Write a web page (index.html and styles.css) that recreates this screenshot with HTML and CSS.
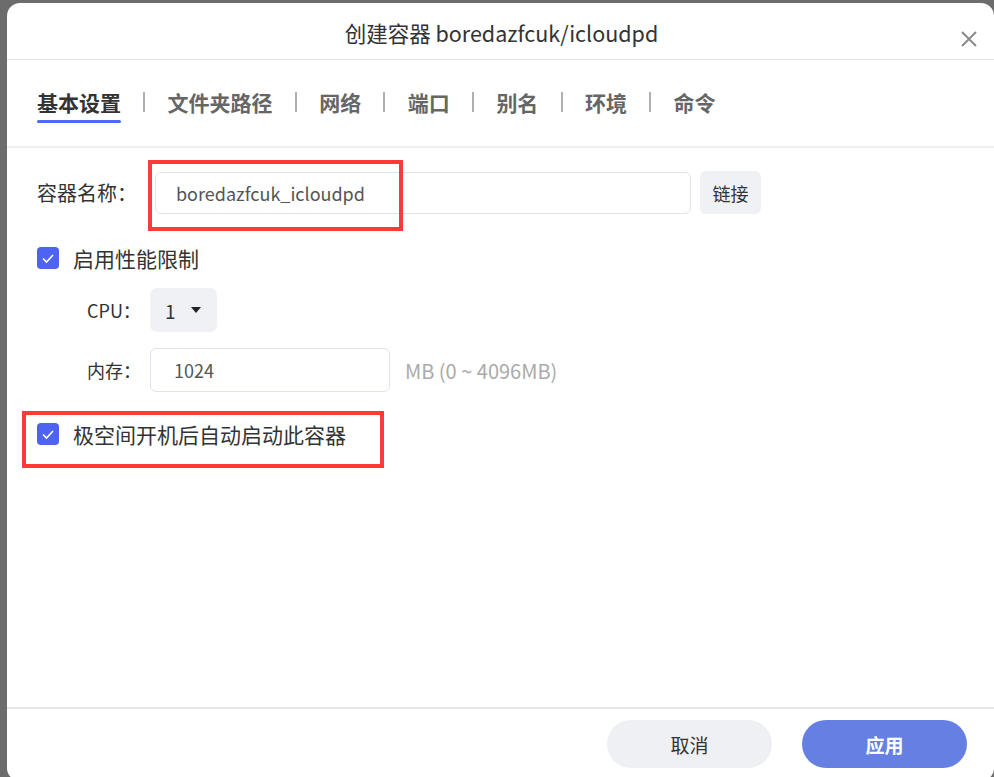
FILE: index.html
```html
<!DOCTYPE html>
<html lang="zh-CN">
<head>
<meta charset="utf-8">
<title>创建容器</title>
<link rel="stylesheet" href="styles.css">
</head>
<body>
<div class="backdrop">
  <div class="modal">
    <div class="modal-header">
      <div class="title">创建容器 boredazfcuk/icloudpd</div>
      <div class="close">
        <svg width="18" height="18" viewBox="0 0 18 18"><path d="M2 2 L16 16 M16 2 L2 16" stroke="#8a8a8a" stroke-width="2" fill="none"/></svg>
      </div>
    </div>
    <div class="tabs">
      <div class="tab active">基本设置</div>
      <div class="sep"></div>
      <div class="tab">文件夹路径</div>
      <div class="sep"></div>
      <div class="tab">网络</div>
      <div class="sep"></div>
      <div class="tab">端口</div>
      <div class="sep"></div>
      <div class="tab">别名</div>
      <div class="sep"></div>
      <div class="tab">环境</div>
      <div class="sep"></div>
      <div class="tab">命令</div>
    </div>
    <div class="modal-body">
      <div class="row row-name">
        <div class="label label-main">容器名称：</div>
        <div class="input input-name">boredazfcuk_icloudpd</div>
        <div class="btn-link">链接</div>
        <div class="mark mark-name"></div>
      </div>
      <div class="check-row check-perf">
        <span class="checkbox"><svg width="22" height="22" viewBox="0 0 22 22"><path d="M6 11.5 L9.5 15 L16 8" stroke="#fff" stroke-width="1.6" fill="none"/></svg></span>
        <span class="check-text">启用性能限制</span>
      </div>
      <div class="row row-cpu">
        <div class="label label-sub">CPU：</div>
        <div class="select"><span>1</span><span class="caret"></span></div>
      </div>
      <div class="row row-mem">
        <div class="label label-sub">内存：</div>
        <div class="input input-mem">1024</div>
        <div class="hint">MB (0 ~ 4096MB)</div>
      </div>
      <div class="check-row check-auto">
        <span class="checkbox"><svg width="22" height="22" viewBox="0 0 22 22"><path d="M6 11.5 L9.5 15 L16 8" stroke="#fff" stroke-width="1.6" fill="none"/></svg></span>
        <span class="check-text">极空间开机后自动启动此容器</span>
        <div class="mark mark-auto"></div>
      </div>
    </div>
    <div class="modal-footer">
      <div class="btn btn-cancel">取消</div>
      <div class="btn btn-apply">应用</div>
    </div>
  </div>
</div>
</body>
</html>
```

FILE: styles.css
```css
html, body {
  margin: 0;
  padding: 0;
  width: 994px;
  height: 777px;
  overflow: hidden;
  background: #6c6c6c;
  font-family: "Noto Sans CJK SC", "Noto Sans", sans-serif;
  color: #333;
}
.backdrop {
  padding: 3px 0 0 7px;
  height: 774px;
}
.modal {
  width: 987px;
  height: 778px;
  background: #fff;
  border-radius: 13px;
  display: flex;
  flex-direction: column;
  position: relative;
}
.modal-header {
  height: 56px;
  border-bottom: 1px solid #e4e4e4;
  display: flex;
  align-items: center;
  justify-content: center;
  position: relative;
}
.title {
  font-size: 21.5px;
  color: #333;
  margin-left: 2px;
  margin-top: 3px;
}
.close {
  position: absolute;
  right: 16px;
  top: 26px;
  width: 18px;
  height: 18px;
}
.tabs {
  height: 88px;
  border-bottom: 2px solid #f0f0f0;
  display: flex;
  align-items: center;
  padding-left: 30px;
  padding-bottom: 2px;
  box-sizing: border-box;
}
.tab {
  font-size: 21px;
  font-weight: bold;
  color: #666;
  position: relative;
  line-height: 30px;
}
.tab.active {
  color: #333;
}
.tab.active::after {
  content: "";
  position: absolute;
  left: 0;
  right: 0;
  bottom: -6px;
  height: 3px;
  border-radius: 2px;
  background: #4a6cf7;
}
.sep {
  width: 2px;
  height: 20px;
  background: #b0b0b0;
  margin: 0 22.3px;
}
.modal-body {
  flex: 1;
  padding: 23px 0 0 30px;
}
.row {
  display: flex;
  align-items: center;
  position: relative;
}
.label {
  font-size: 20px;
  color: #333;
  white-space: nowrap;
}
.label-main {
  width: 118px;
}
.label-sub {
  width: 63px;
  margin-left: 50px;
  font-size: 18px;
}
.input {
  box-sizing: border-box;
  border: 1px solid #e2e2ea;
  border-radius: 6px;
  height: 42px;
  display: flex;
  align-items: center;
  font-size: 18px;
  color: #555;
}
.input-name {
  width: 536px;
  padding-left: 20px;
}
.btn-link {
  margin-left: 9px;
  width: 61px;
  height: 43px;
  border-radius: 6px;
  background: #f0f1f5;
  display: flex;
  align-items: center;
  justify-content: center;
  font-size: 18px;
  color: #333;
}
.mark {
  position: absolute;
  border: 4px solid #fd3a3a;
  box-sizing: border-box;
}
.mark-name {
  left: 111px;
  top: -11px;
  width: 255px;
  height: 71px;
}
.check-row {
  display: flex;
  align-items: center;
  position: relative;
}
.check-perf {
  margin-top: 29px;
}
.checkbox {
  width: 22px;
  height: 22px;
  border-radius: 4px;
  background: #4e64f0;
  display: inline-flex;
}
.check-text {
  margin-left: 14px;
  font-size: 21px;
  color: #333;
}
.row-cpu {
  margin-top: 15px;
}
.select {
  width: 67px;
  height: 44px;
  border-radius: 7px;
  background: #f0f1f5;
  display: flex;
  align-items: center;
  padding-left: 15px;
  box-sizing: border-box;
  font-size: 19px;
  color: #333;
}
.caret {
  width: 0;
  height: 0;
  border-left: 5px solid transparent;
  border-right: 5px solid transparent;
  border-top: 6px solid #222;
  margin-left: 15px;
}
.row-mem {
  margin-top: 16px;
}
.input-mem {
  width: 240px;
  height: 44px;
  padding-left: 23px;
}
.hint {
  margin-left: 15px;
  font-size: 20px;
  color: #aaa;
}
.check-auto {
  margin-top: 27px;
}
.mark-auto {
  left: -15px;
  top: -8px;
  width: 362px;
  height: 57px;
}
.modal-footer {
  height: 57px;
  border-top: 2px solid #e8e8e8;
  display: flex;
  justify-content: flex-end;
  align-items: flex-start;
  padding: 11px 27px 0 0;
  gap: 30px;
  margin-bottom: 4px;
}
.btn {
  width: 165px;
  height: 48px;
  border-radius: 24px;
  display: flex;
  align-items: center;
  justify-content: center;
  font-size: 19px;
}
.btn-cancel {
  background: #eef0f4;
  color: #333;
}
.btn-apply {
  background: #6580e2;
  color: #fff;
  font-weight: bold;
}
```
